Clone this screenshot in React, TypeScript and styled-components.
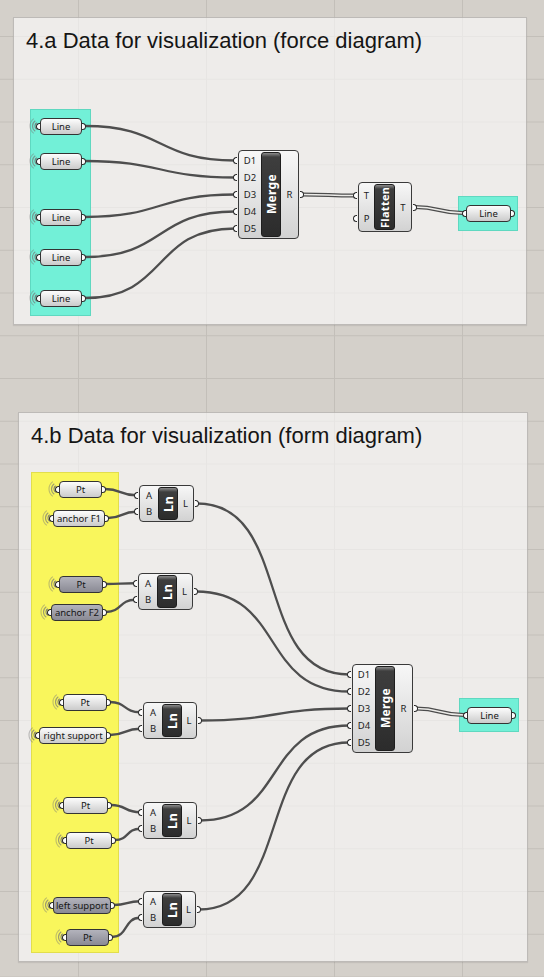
import React from 'react';
import styled, { createGlobalStyle, css } from 'styled-components';

type Pt = [number, number];

interface GroupDef { x: number; y: number; w: number; h: number; tone: 'cyan' | 'yellow'; }
interface ParamDef { x: number; cy: number; w: number; label: string; dark?: boolean; wireless?: boolean; }
interface CompDef {
  x: number; y: number; w: number; h: number;
  name: string; nameSize: number; inW: number; barW: number;
  inputs: string[]; outputs: string[];
}
interface WireDef { from: Pt; to: Pt; tree?: boolean; }

const GlobalStyle = createGlobalStyle`
  html, body { margin: 0; padding: 0; }
  body {
    width: 544px;
    min-height: 977px;
    overflow: hidden;
    background-color: #d4d0ca;
    background-image:
      linear-gradient(to right, #c3bfb9 1px, transparent 1px),
      linear-gradient(to bottom, #c3bfb9 1px, transparent 1px);
    background-size: 128px 42.75px;
    background-position: 78px 36px;
    font-family: 'Noto Sans', 'Open Sans', sans-serif;
  }
`;

const Page = styled.div`
  display: flex;
  flex-direction: column;
  padding-top: 17px;
`;

const Panel = styled.section<{ $left: number; $width: number; $height: number; $gap: number }>`
  display: flex;
  flex-direction: column;
  box-sizing: border-box;
  margin-left: ${p => p.$left}px;
  margin-top: ${p => p.$gap}px;
  width: ${p => p.$width}px;
  height: ${p => p.$height}px;
  background: rgba(255, 255, 255, 0.6);
  border: 1px solid rgba(150, 146, 140, 0.55);
  box-shadow: 0 1px 1px rgba(0, 0, 0, 0.08);
`;

const Title = styled.h2`
  box-sizing: border-box;
  height: 40px;
  margin: 0;
  padding: 12px 0 0 12px;
  font-family: 'Liberation Sans', Arial, sans-serif;
  font-size: 22px;
  line-height: 22px;
  font-weight: normal;
  color: #151515;
`;

const Canvas = styled.div`
  position: relative;
  flex: 1;
`;

const Wires = styled.svg`
  position: absolute;
  left: 0;
  top: 0;
  overflow: visible;
`;

const Group = styled.div.attrs<{ $x: number; $y: number; $w: number; $h: number }>(p => ({
  style: { left: p.$x, top: p.$y, width: p.$w, height: p.$h },
}))<{ $tone: 'cyan' | 'yellow' }>`
  position: absolute;
  box-sizing: border-box;
  background: ${p => (p.$tone === 'cyan' ? '#72f0d7' : '#f9f65c')};
  border: 1px solid ${p => (p.$tone === 'cyan' ? '#5fd8c0' : '#e2de4c')};
`;

const ParamBox = styled.div.attrs<{ $x: number; $y: number; $w: number }>(p => ({
  style: { left: p.$x, top: p.$y, width: p.$w },
}))<{ $dark?: boolean }>`
  position: absolute;
  box-sizing: border-box;
  height: 17px;
  border: 1px solid #333;
  border-radius: 4px;
  background: ${p =>
    p.$dark ? 'linear-gradient(#b3b3bc, #8a8a94)' : 'linear-gradient(#fdfdfd, #cbcbcb)'};
  display: flex;
  align-items: center;
  justify-content: center;
  font-size: 9.5px;
  color: #161616;
  white-space: nowrap;
`;

const Grip = styled.span<{ $side: 'left' | 'right' }>`
  position: absolute;
  top: 50%;
  width: 4px;
  height: 7px;
  margin-top: -3.5px;
  box-sizing: border-box;
  background: #fff;
  border: 1.5px solid #2a2a2a;
  ${p =>
    p.$side === 'left'
      ? css`left: -5px; border-right: none; border-radius: 4px 0 0 4px;`
      : css`right: -5px; border-left: none; border-radius: 0 4px 4px 0;`}
`;

const WirelessMark = styled.svg`
  position: absolute;
  left: -20px;
  top: 50%;
  margin-top: -9px;
`;

const CompBox = styled.div.attrs<{ $x: number; $y: number; $w: number; $h: number }>(p => ({
  style: { left: p.$x, top: p.$y, width: p.$w, height: p.$h },
}))`
  position: absolute;
  box-sizing: border-box;
  display: flex;
  padding: 1px 0;
  border: 1px solid #3a3a3a;
  border-radius: 4px;
  background: linear-gradient(#f7f7f7, #d2d2d2);
`;

const PortCol = styled.div<{ $width?: number }>`
  display: flex;
  flex-direction: column;
  ${p => (p.$width ? css`width: ${p.$width}px;` : css`flex: 1;`)}
`;

const Port = styled.div`
  position: relative;
  flex: 1;
  display: flex;
  align-items: center;
  justify-content: center;
  font-size: 9.5px;
  color: #1c1c1c;
`;

const PortGrip = styled(Grip)`
  ${p => (p.$side === 'left' ? css`left: -6px;` : css`right: -6px;`)}
`;

const Bar = styled.div<{ $width: number; $size: number }>`
  width: ${p => p.$width}px;
  box-sizing: border-box;
  border: 1px solid #1e1e1e;
  border-radius: 3px;
  background: linear-gradient(#2c2c2c 0, #3e3e3e calc(100% - 4px), #8c8c8c 100%);
  display: flex;
  align-items: center;
  justify-content: center;
  color: #fff;
  font-weight: bold;
  font-size: ${p => p.$size}px;
  letter-spacing: 0.3px;
  writing-mode: vertical-rl;
  transform: rotate(180deg);
`;

const paramOut = (p: ParamDef): Pt => [p.x + p.w + 3, p.cy];
const paramIn = (p: ParamDef): Pt => [p.x - 3, p.cy];
const portY = (c: CompDef, n: number, i: number) => c.y + 2 + ((c.h - 4) / n) * (i + 0.5);
const compIn = (c: CompDef, i: number): Pt => [c.x - 3, portY(c, c.inputs.length, i)];
const compOut = (c: CompDef, i: number): Pt => [c.x + c.w + 3, portY(c, c.outputs.length, i)];

const wirePath = ([x0, y0]: Pt, [x1, y1]: Pt) => {
  const dx = Math.abs(x1 - x0);
  const dy = Math.abs(y1 - y0);
  const k = dx * 0.5 + dy * 0.12;
  return `M${x0} ${y0} C${x0 + k} ${y0} ${x1 - k} ${y1} ${x1} ${y1}`;
};

const Wireless: React.FC = () => (
  <WirelessMark width="16" height="18" viewBox="0 0 16 18">
    {[4, 6.5, 9].map((r, i) => {
      const a = (55 * Math.PI) / 180;
      const cx = 18;
      const x = cx - r * Math.cos(a);
      return (
        <path
          key={r}
          d={`M${x} ${9 - r * Math.sin(a)} A${r} ${r} 0 0 0 ${x} ${9 + r * Math.sin(a)}`}
          fill="none"
          stroke="#777"
          strokeOpacity={0.95 - i * 0.25}
          strokeWidth="1.1"
        />
      );
    })}
  </WirelessMark>
);

const Param: React.FC<{ def: ParamDef; ox: number; oy: number }> = ({ def, ox, oy }) => (
  <ParamBox $x={def.x - ox} $y={def.cy - 8.5 - oy} $w={def.w} $dark={def.dark}>
    {def.wireless !== false && <Wireless />}
    <Grip $side="left" />
    {def.label}
    <Grip $side="right" />
  </ParamBox>
);

const Component: React.FC<{ def: CompDef; ox: number; oy: number }> = ({ def, ox, oy }) => (
  <CompBox $x={def.x - ox} $y={def.y - oy} $w={def.w} $h={def.h}>
    <PortCol $width={def.inW}>
      {def.inputs.map((label, i) => (
        <Port key={i}>
          <PortGrip $side="left" />
          {label}
        </Port>
      ))}
    </PortCol>
    <Bar $width={def.barW} $size={def.nameSize}>{def.name}</Bar>
    <PortCol>
      {def.outputs.map((label, i) => (
        <Port key={i}>
          {label}
          <PortGrip $side="right" />
        </Port>
      ))}
    </PortCol>
  </CompBox>
);

interface Diagram {
  title: string;
  left: number; top: number; width: number; height: number; gap: number;
  groups: GroupDef[];
  params: ParamDef[];
  comps: CompDef[];
  wires: WireDef[];
}

const mergeAt = (x: number, y: number): CompDef => ({
  x, y, w: 61, h: 89, name: 'Merge', nameSize: 12, inW: 22, barW: 20,
  inputs: ['D1', 'D2', 'D3', 'D4', 'D5'], outputs: ['R'],
});

const lnAt = (x: number, y: number, w: number): CompDef => ({
  x, y, w, h: 37, name: 'Ln', nameSize: 13, inW: 18, barW: 20,
  inputs: ['A', 'B'], outputs: ['L'],
});

// 4.a force diagram
const forceLines: ParamDef[] = [126, 161, 217, 257, 298].map(cy => ({ x: 40, cy, w: 42, label: 'Line' }));
const forceOut: ParamDef = { x: 466, cy: 213, w: 45, label: 'Line', wireless: false };
const forceMerge = mergeAt(238, 150);
const flatten: CompDef = {
  x: 358, y: 182, w: 54, h: 50, name: 'Flatten', nameSize: 11, inW: 15, barW: 21,
  inputs: ['T', 'P'], outputs: ['T'],
};

const force: Diagram = {
  title: '4.a Data for visualization (force diagram)',
  left: 13, top: 17, width: 514, height: 308, gap: 0,
  groups: [
    { x: 30, y: 109, w: 61, h: 207, tone: 'cyan' },
    { x: 458, y: 196, w: 60, h: 35, tone: 'cyan' },
  ],
  params: [...forceLines, forceOut],
  comps: [forceMerge, flatten],
  wires: [
    ...forceLines.map((p, i) => ({ from: paramOut(p), to: compIn(forceMerge, i) })),
    { from: compOut(forceMerge, 0), to: compIn(flatten, 0), tree: true },
    { from: compOut(flatten, 0), to: paramIn(forceOut), tree: true },
  ],
};

// 4.b form diagram
const formParams: ParamDef[] = [
  { x: 59, cy: 489, w: 43, label: 'Pt' },
  { x: 53, cy: 518, w: 52, label: 'anchor F1' },
  { x: 59, cy: 584, w: 44, label: 'Pt', dark: true },
  { x: 51, cy: 612, w: 52, label: 'anchor F2', dark: true },
  { x: 63, cy: 702, w: 44, label: 'Pt' },
  { x: 39, cy: 735, w: 68, label: 'right support' },
  { x: 63, cy: 805, w: 45, label: 'Pt' },
  { x: 66, cy: 840, w: 46, label: 'Pt' },
  { x: 53, cy: 905, w: 58, label: 'left support', dark: true },
  { x: 66, cy: 937, w: 43, label: 'Pt', dark: true },
];
const formLns: CompDef[] = [
  lnAt(139, 485, 55),
  lnAt(138, 573, 55),
  lnAt(143, 702, 54),
  lnAt(143, 802, 54),
  lnAt(143, 891, 53),
];
const formMerge = mergeAt(352, 664);
const formOut: ParamDef = { x: 467, cy: 715, w: 45, label: 'Line', wireless: false };

const form: Diagram = {
  title: '4.b Data for visualization (form diagram)',
  left: 18, top: 412, width: 510, height: 550, gap: 87,
  groups: [
    { x: 31, y: 472, w: 88, h: 481, tone: 'yellow' },
    { x: 459, y: 698, w: 60, h: 34, tone: 'cyan' },
  ],
  params: [...formParams, formOut],
  comps: [...formLns, formMerge],
  wires: [
    ...formParams.map((p, i) => ({ from: paramOut(p), to: compIn(formLns[i >> 1], i % 2) })),
    ...formLns.map((c, i) => ({ from: compOut(c, 0), to: compIn(formMerge, i) })),
    { from: compOut(formMerge, 0), to: paramIn(formOut), tree: true },
  ],
};

const DiagramPanel: React.FC<{ d: Diagram }> = ({ d }) => {
  // canvas origin in page coordinates: inside the border, below the title
  const ox = d.left + 1;
  const oy = d.top + 1 + 40;
  const cw = d.width - 2;
  const ch = d.height - 42;
  return (
    <Panel $left={d.left} $width={d.width} $height={d.height} $gap={d.gap}>
      <Title>{d.title}</Title>
      <Canvas>
        {d.groups.map((g, i) => (
          <Group key={i} $x={g.x - ox} $y={g.y - oy} $w={g.w} $h={g.h} $tone={g.tone} />
        ))}
        <Wires width={cw} height={ch} viewBox={`${ox} ${oy} ${cw} ${ch}`}>
          {d.wires.map((w, i) =>
            w.tree ? (
              <g key={i} fill="none">
                <path d={wirePath(w.from, w.to)} stroke="#4c4c4c" strokeWidth="4.2" />
                <path d={wirePath(w.from, w.to)} stroke="#ecebe8" strokeWidth="1.4" />
              </g>
            ) : (
              <path key={i} d={wirePath(w.from, w.to)} fill="none" stroke="#4e4e4e" strokeWidth="2.3" />
            )
          )}
        </Wires>
        {d.params.map((p, i) => (
          <Param key={i} def={p} ox={ox} oy={oy} />
        ))}
        {d.comps.map((c, i) => (
          <Component key={i} def={c} ox={ox} oy={oy} />
        ))}
      </Canvas>
    </Panel>
  );
};

const App: React.FC = () => (
  <>
    <GlobalStyle />
    <Page>
      <DiagramPanel d={force} />
      <DiagramPanel d={form} />
    </Page>
  </>
);

export default App;
